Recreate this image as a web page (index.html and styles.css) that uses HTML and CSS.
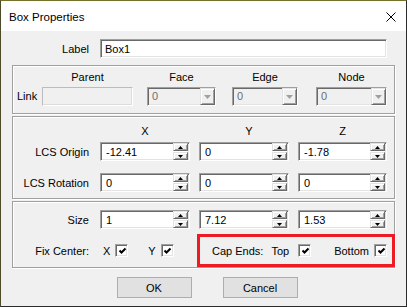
FILE: index.html
```html
<!DOCTYPE html>
<html lang="en">
<head>
    <meta charset="UTF-8">
    <title>Box Properties</title>
    <link rel="stylesheet" href="styles.css">
</head>
<body>
    <div class="window">
        <div class="titlebar">
            <span class="title">Box Properties</span>
            <svg class="close" width="10" height="10" viewBox="0 0 10 10"><path d="M0.5 0.5L9.5 9.5M9.5 0.5L0.5 9.5" stroke="#000" stroke-width="1"/></svg>
        </div>

        <div class="dialog">
            <div class="label-row">
                <label class="row-label">Label</label>
                <input class="field label-input" value="Box1">
            </div>

            <div class="group group-link">
                <div class="link-label">Link</div>
                <div class="fcol col-parent">
                    <div class="hdr">Parent</div>
                    <input class="field field-off" disabled>
                </div>
                <div class="fcol col-face">
                    <div class="hdr">Face</div>
                    <div class="combo"><span class="combo-val">0</span><span class="combo-btn"><svg width="7" height="4" viewBox="0 0 7 4"><path d="M0 0H7L3.5 4Z" fill="#a0a0a0"/></svg></span></div>
                </div>
                <div class="fcol col-edge">
                    <div class="hdr">Edge</div>
                    <div class="combo"><span class="combo-val">0</span><span class="combo-btn"><svg width="7" height="4" viewBox="0 0 7 4"><path d="M0 0H7L3.5 4Z" fill="#a0a0a0"/></svg></span></div>
                </div>
                <div class="fcol col-node">
                    <div class="hdr">Node</div>
                    <div class="combo"><span class="combo-val">0</span><span class="combo-btn"><svg width="7" height="4" viewBox="0 0 7 4"><path d="M0 0H7L3.5 4Z" fill="#a0a0a0"/></svg></span></div>
                </div>
            </div>

            <div class="group group-xyz">
                <div></div>
                <div class="hdr">X</div>
                <div class="hdr hdr-y">Y</div>
                <div class="hdr">Z</div>

                <div class="row-label">LCS Origin</div>
                <div class="spin"><input value="-12.41"><div class="spin-btns"><span class="spin-btn"><svg width="5" height="3" viewBox="0 0 5 3"><path d="M2.5 0L5 3H0Z"/></svg></span><span class="spin-btn"><svg width="5" height="3" viewBox="0 0 5 3"><path d="M0 0H5L2.5 3Z"/></svg></span></div></div>
                <div class="spin"><input value="0"><div class="spin-btns"><span class="spin-btn"><svg width="5" height="3" viewBox="0 0 5 3"><path d="M2.5 0L5 3H0Z"/></svg></span><span class="spin-btn"><svg width="5" height="3" viewBox="0 0 5 3"><path d="M0 0H5L2.5 3Z"/></svg></span></div></div>
                <div class="spin"><input value="-1.78"><div class="spin-btns"><span class="spin-btn"><svg width="5" height="3" viewBox="0 0 5 3"><path d="M2.5 0L5 3H0Z"/></svg></span><span class="spin-btn"><svg width="5" height="3" viewBox="0 0 5 3"><path d="M0 0H5L2.5 3Z"/></svg></span></div></div>

                <div class="row-label">LCS Rotation</div>
                <div class="spin"><input value="0"><div class="spin-btns"><span class="spin-btn"><svg width="5" height="3" viewBox="0 0 5 3"><path d="M2.5 0L5 3H0Z"/></svg></span><span class="spin-btn"><svg width="5" height="3" viewBox="0 0 5 3"><path d="M0 0H5L2.5 3Z"/></svg></span></div></div>
                <div class="spin"><input value="0"><div class="spin-btns"><span class="spin-btn"><svg width="5" height="3" viewBox="0 0 5 3"><path d="M2.5 0L5 3H0Z"/></svg></span><span class="spin-btn"><svg width="5" height="3" viewBox="0 0 5 3"><path d="M0 0H5L2.5 3Z"/></svg></span></div></div>
                <div class="spin"><input value="0"><div class="spin-btns"><span class="spin-btn"><svg width="5" height="3" viewBox="0 0 5 3"><path d="M2.5 0L5 3H0Z"/></svg></span><span class="spin-btn"><svg width="5" height="3" viewBox="0 0 5 3"><path d="M0 0H5L2.5 3Z"/></svg></span></div></div>
            </div>

            <div class="group group-size">
                <div class="row-label">Size</div>
                <div class="spin"><input value="1"><div class="spin-btns"><span class="spin-btn"><svg width="5" height="3" viewBox="0 0 5 3"><path d="M2.5 0L5 3H0Z"/></svg></span><span class="spin-btn"><svg width="5" height="3" viewBox="0 0 5 3"><path d="M0 0H5L2.5 3Z"/></svg></span></div></div>
                <div class="spin"><input value="7.12"><div class="spin-btns"><span class="spin-btn"><svg width="5" height="3" viewBox="0 0 5 3"><path d="M2.5 0L5 3H0Z"/></svg></span><span class="spin-btn"><svg width="5" height="3" viewBox="0 0 5 3"><path d="M0 0H5L2.5 3Z"/></svg></span></div></div>
                <div class="spin"><input value="1.53"><div class="spin-btns"><span class="spin-btn"><svg width="5" height="3" viewBox="0 0 5 3"><path d="M2.5 0L5 3H0Z"/></svg></span><span class="spin-btn"><svg width="5" height="3" viewBox="0 0 5 3"><path d="M0 0H5L2.5 3Z"/></svg></span></div></div>

                <div class="row-label">Fix Center:</div>
                <div class="fix-pairs">
                    <span class="chk-text">X</span>
                    <span class="check"><svg width="9" height="9" viewBox="0 0 9 9"><path d="M1.5 3.5L3.5 5.5L7.5 1.5" fill="none" stroke="#000" stroke-width="2"/></svg></span>
                    <span class="chk-text chk-y">Y</span>
                    <span class="check"><svg width="9" height="9" viewBox="0 0 9 9"><path d="M1.5 3.5L3.5 5.5L7.5 1.5" fill="none" stroke="#000" stroke-width="2"/></svg></span>
                </div>
                <div class="cap-ends">
                    <span class="chk-text">Cap Ends:</span>
                    <span class="chk-text chk-top">Top</span>
                    <span class="check check-top"><svg width="9" height="9" viewBox="0 0 9 9"><path d="M1.5 3.5L3.5 5.5L7.5 1.5" fill="none" stroke="#000" stroke-width="2"/></svg></span>
                    <span class="chk-text chk-bottom">Bottom</span>
                    <span class="check"><svg width="9" height="9" viewBox="0 0 9 9"><path d="M1.5 3.5L3.5 5.5L7.5 1.5" fill="none" stroke="#000" stroke-width="2"/></svg></span>
                </div>
            </div>

            <div class="buttons">
                <button>OK</button>
                <button>Cancel</button>
            </div>

            <div class="highlight"></div>
        </div>
    </div>
</body>
</html>
```

FILE: styles.css
```css
* {
    margin: 0;
    padding: 0;
    box-sizing: border-box;
}

html, body {
    width: 407px;
    height: 307px;
    overflow: hidden;
    background: #f0f0f0;
}

body {
    font-family: "Liberation Sans", Arial, sans-serif;
    font-size: 11px;
    color: #000;
}

.window {
    width: 407px;
    height: 307px;
    border: 1px solid #2b2b2b;
    border-top-color: #77722a;
    border-left-color: #4e4b2a;
    display: flex;
    flex-direction: column;
}

.titlebar {
    height: 30px;
    background: #fff;
    display: flex;
    align-items: center;
    justify-content: space-between;
    padding: 1px 10px 0 8px;
}

.title {
    font-size: 11.5px;
}

.dialog {
    flex: 1;
    position: relative;
    padding: 8px 11px 0 11px;
}

.label-row {
    display: flex;
    align-items: center;
    gap: 9px;
    margin-bottom: 7px;
}

.label-row .row-label {
    width: 79px;
}

.row-label {
    text-align: right;
    padding-right: 2px;
}

.field {
    height: 19px;
    font: inherit;
    padding: 0 4px;
    border: 1px solid;
    border-color: #a0a0a0 #fff #fff #a0a0a0;
    box-shadow: inset 1px 1px #696969, inset -1px -1px #e3e3e3;
    background: #fff;
    outline: none;
}

.label-input {
    width: 287px;
}

.field-off {
    width: 91px;
    background: #f0f0f0;
    border-color: #bcbcbc #fff #fff #bcbcbc;
    box-shadow: inset -1px -1px #dcdcdc;
}

.group {
    border: 1px solid #a0a0a0;
    box-shadow: inset 1px 1px #fff, 1px 1px #fff;
}

.group + .group {
    margin-top: 2px;
}

.hdr {
    text-align: center;
    height: 13px;
    line-height: 13px;
}

.hdr-y {
    padding-left: 10px;
}

.group-link {
    display: grid;
    grid-template-columns: 29px 91px 83px 82px 89px;
    align-items: end;
    padding: 5px 0 7px 0;
}

.link-label {
    padding-left: 4px;
    height: 19px;
    line-height: 19px;
}

.fcol {
    display: flex;
    flex-direction: column;
    gap: 3px;
    justify-self: end;
}

.col-parent { width: 91px; }
.col-face { width: 69px; }
.col-edge { width: 66px; }
.col-node { width: 71px; }

.combo {
    height: 19px;
    display: flex;
    border: 1px solid;
    border-color: #a0a0a0 #fff #fff #a0a0a0;
    box-shadow: inset 1px 1px #696969, inset -1px -1px #e3e3e3;
    background: #f0f0f0;
}

.combo-val {
    flex: 1;
    color: #6d6d6d;
    padding-left: 4px;
    line-height: 17px;
}

.combo-btn {
    width: 15px;
    display: flex;
    align-items: center;
    justify-content: center;
    border: 1px solid;
    border-color: #e3e3e3 #696969 #696969 #e3e3e3;
    box-shadow: inset 1px 1px #fff, inset -1px -1px #a0a0a0;
    background: #f0f0f0;
}

.group-xyz,
.group-size {
    display: grid;
    grid-template-columns: 78px 90px 90px 89px;
    column-gap: 9px;
    align-items: center;
}

.group-xyz {
    padding: 8px 0 6px 0;
    row-gap: 12px;
}

.group-xyz .hdr {
    margin-bottom: -8px;
}

.group-size {
    padding: 8px 0 8px 0;
    row-gap: 13px;
}

.spin {
    height: 19px;
    display: flex;
    border: 1px solid;
    border-color: #a0a0a0 #fff #fff #a0a0a0;
    box-shadow: inset 1px 1px #696969, inset -1px -1px #e3e3e3;
    background: #fff;
}

.spin input {
    flex: 1;
    min-width: 0;
    border: none;
    background: transparent;
    font: inherit;
    padding: 1px 0 0 5px;
    outline: none;
}

.spin-btns {
    width: 15px;
    display: flex;
    flex-direction: column;
    gap: 1px;
    margin-right: 1px;
}

.spin-btn {
    flex: 1;
    display: flex;
    align-items: center;
    justify-content: center;
    border: 1px solid;
    border-color: #e3e3e3 #696969 #696969 #e3e3e3;
    box-shadow: inset 1px 1px #fff, inset -1px -1px #a0a0a0;
    background: #f0f0f0;
}

.fix-pairs,
.cap-ends {
    display: flex;
    align-items: center;
    height: 17px;
}

.fix-pairs {
    padding-left: 3px;
}

.cap-ends {
    grid-column: 3 / 5;
    padding-left: 13px;
}

.chk-text + .check {
    margin-left: 5px;
}

.chk-y {
    margin-left: 20px;
}

.chk-top {
    margin-left: 8px;
}

.check-top {
    margin-left: 9px !important;
}

.chk-bottom {
    margin-left: auto;
}

.check {
    width: 13px;
    height: 13px;
    display: flex;
    align-items: center;
    justify-content: center;
    background: #fff;
    border: 1px solid;
    border-color: #a0a0a0 #fff #fff #a0a0a0;
    box-shadow: inset 1px 1px #696969, inset -1px -1px #e3e3e3;
}

.check svg {
    margin: 1px 0 0 1px;
}

.buttons {
    display: flex;
    justify-content: center;
    gap: 31px;
    padding-left: 7px;
    margin-top: 9px;
}

button {
    width: 75px;
    height: 21px;
    font: inherit;
    color: #000;
    background: #e1e1e1;
    border: 1px solid #adadad;
}

.highlight {
    position: absolute;
    left: 196px;
    top: 203px;
    width: 198px;
    height: 33px;
    border: 3px solid #ed1c24;
}
```
